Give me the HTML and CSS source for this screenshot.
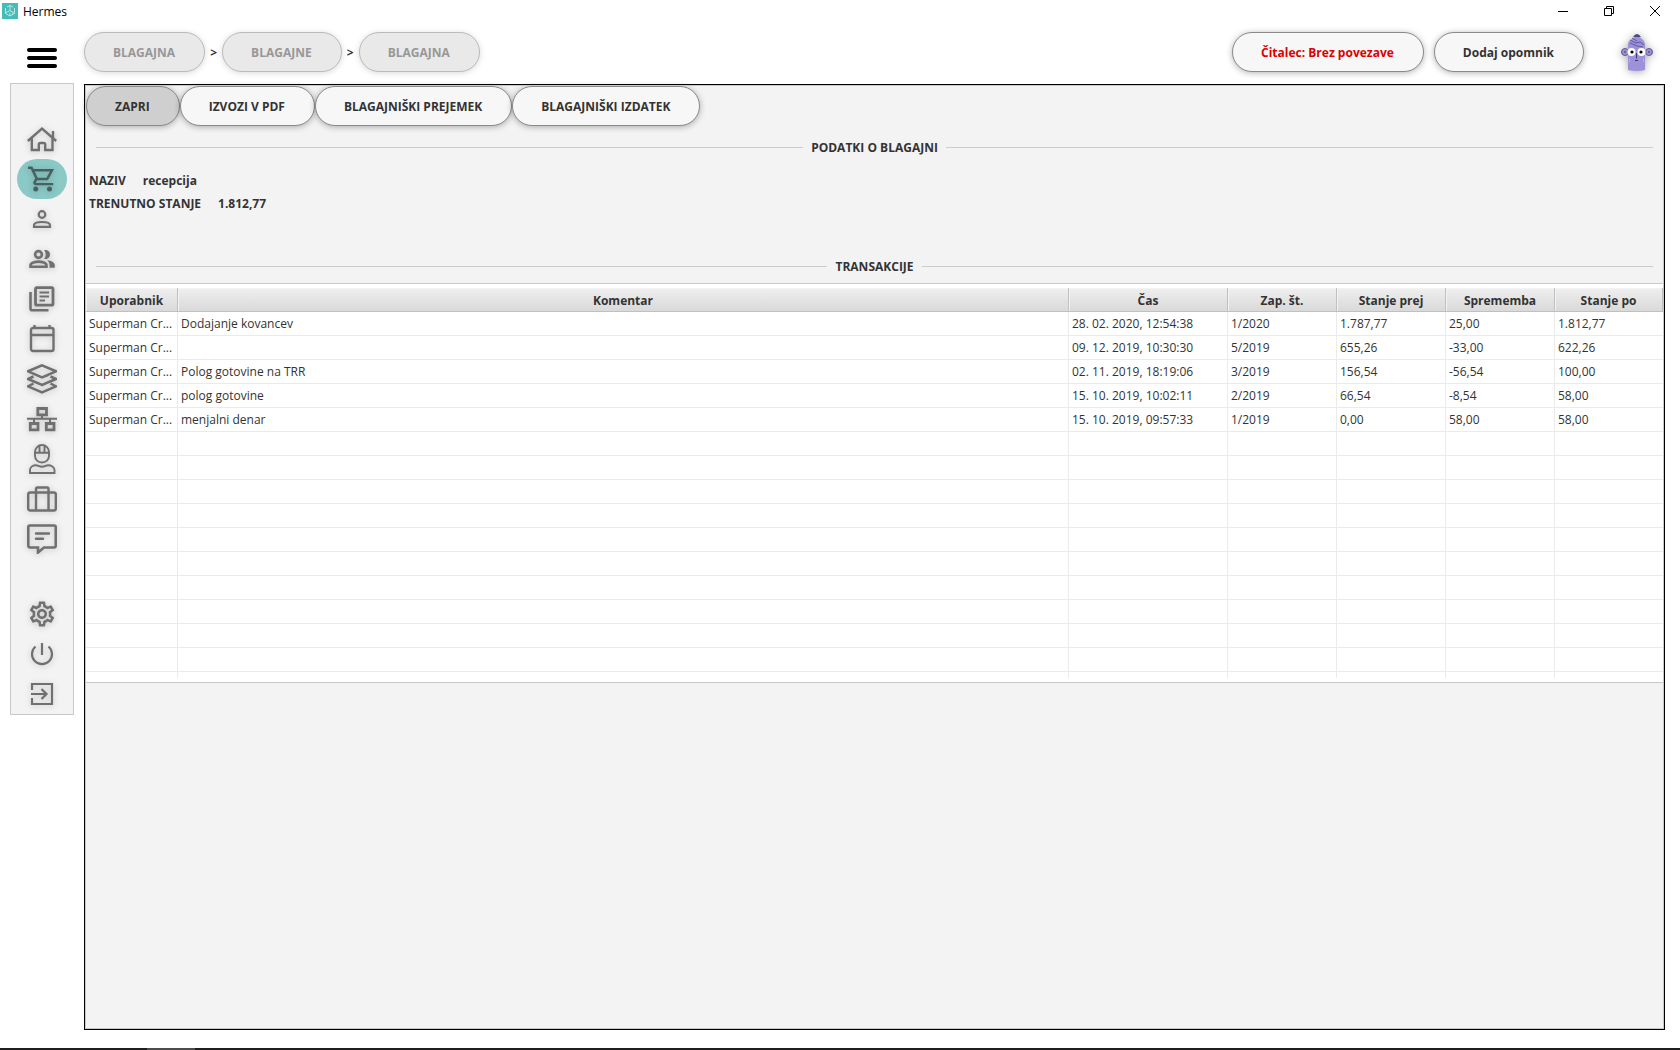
FILE: index.html
```html
<!DOCTYPE html>
<html lang="sl">
<head>
<meta charset="utf-8">
<title>Hermes</title>
<link rel="stylesheet" href="styles.css">
</head>
<body>
<div class="titlebar">
  <svg class="app-logo" viewBox="0 0 16 16" aria-hidden="true"><rect width="16" height="16" fill="#45bdb6"/><path d="M8 2.500v5M8 2.500L5 4M8 2.500l3 1.500M3.500 5v5.500L8 13l4.500-2.500V5M3.500 10L8 7.500l3 2M8 13v-3M11 8.500v3" fill="none" stroke="#b5e8e4"/></svg>
  <span class="app-name">Hermes</span>
  <div class="window-controls">
    <button type="button" class="win-btn" aria-label="Pomanjšaj"><svg viewBox="0 0 10 10"><path d="M0 5.500h10"/></svg></button>
    <button type="button" class="win-btn" aria-label="Obnovi"><svg viewBox="0 0 10 10"><path d="M.5 2.500h7v7h-7zM2.500 2.500v-2h7v7h-2"/></svg></button>
    <button type="button" class="win-btn" aria-label="Zapri okno"><svg viewBox="0 0 10 10"><path d="M0 0l10 10M10 0L0 10"/></svg></button>
  </div>
</div>

<header class="topbar">
  <button type="button" class="menu-btn" aria-label="Meni"><span class="bar"></span><span class="bar"></span><span class="bar"></span></button>
  <nav class="crumbs">
    <button type="button" class="pill" disabled>BLAGAJNA</button>
    <span class="crumb-sep">&gt;</span>
    <button type="button" class="pill" disabled>BLAGAJNE</button>
    <span class="crumb-sep">&gt;</span>
    <button type="button" class="pill" disabled>BLAGAJNA</button>
  </nav>
  <div class="actions">
    <button type="button" class="pill alert">Čitalec: Brez povezave</button>
    <button type="button" class="pill">Dodaj opomnik</button>
  </div>
  <svg class="avatar" viewBox="0 0 32 40" role="img" aria-label="Uporabnik">
    <circle cx="4" cy="20" r="3.500" fill="#9a90d6" stroke="#5d5790"/><circle cx="28" cy="20" r="3.500" fill="#9a90d6" stroke="#5d5790"/>
    <path d="M3 20h2M27 20h2" stroke="#3d3966"/>
    <path d="M7 38V12q0-3 4-5l5-4 5 4q3 2 3 5v26q-8 2-17 0z" fill="#9d92da"/>
    <path d="M12 5q4-6 8 0z" fill="#4b4780"/>
    <path d="M9 8l6 3 4-1 4 3M9 11l7 3 6 1M11 6l5 3" fill="none" stroke="#6159a0"/>
    <circle cx="10.500" cy="20" r="4" fill="#fff"/><circle cx="20.500" cy="20" r="4" fill="#fff"/>
    <circle cx="11" cy="20" r="1.600" fill="#000"/><circle cx="20" cy="20" r="1.600" fill="#000"/>
    <path d="M15.500 21v5.500M14 28.500h3" stroke="#3d3966"/>
    <path d="M8.500 27v3M22.500 27v3" stroke="#c9c2f0" stroke-dasharray="1 1"/>
  </svg>
</header>

<div class="workspace">
  <nav class="sidebar">
    <a class="nav-item" href="#" aria-label="Domov"><svg viewBox="0 0 30 30"><path d="M.8 17L15 4.700 29.200 17M4.800 14.500V26H11.800V20.500Q11.800 19 13.300 19h3.400Q18.200 19 18.200 20.500V26H25.500V14.500M26 13.500V7" fill="none" stroke-width="2.400"/></svg></a>
    <a class="nav-item active" href="#" aria-label="Blagajna"><svg viewBox="0 0 24 24" class="solid"><path d="M15.550 13c.75 0 1.410-.41 1.750-1.030L21.700 4H5.210l-.94-2H.8v2H3l3.600 7.590-1.350 2.440C4.520 15.370 5.480 17 7 17h14v-1.800H7L8.100 13zM6.160 6h12.150l-2.760 5H8.530zM7 18a2 2 0 1 0 0 4 2 2 0 0 0 0-4zM18 18a2 2 0 1 0 0 4 2 2 0 0 0 0-4z"/></svg></a>
    <a class="nav-item" href="#" aria-label="Gost"><svg viewBox="0 0 30 30"><circle cx="15" cy="10.500" r="3.300" fill="none" stroke-width="2.200"/><path d="M7 22.800v-1.500c0-2.500 5-3.300 8-3.300s8 .8 8 3.300v1.500z" fill="none" stroke-width="2.200"/></svg></a>
    <a class="nav-item" href="#" aria-label="Skupine"><svg viewBox="0 0 30 30"><circle cx="11.500" cy="10.500" r="3.400" fill="none" stroke-width="2.600"/><path d="M3.500 22.700v-1.500c0-2.500 5-3.600 8-3.600s8 1.100 8 3.600v1.500z" fill="none" stroke-width="2.600"/><path class="fill" d="M17.200 6.200c1-.5 5.800-.4 5.800 4.300s-4.800 4.900-5.800 4.400c2-2.600 2-6 0-8.700zM20.200 16.200c4 .4 7.600 2 7.600 4.800v2.800h-5.300V21c0-2-1-3.600-2.300-4.800z"/></svg></a>
    <a class="nav-item" href="#" aria-label="Dokumenti"><svg viewBox="0 0 30 30"><rect x="8.500" y="3.700" width="17.500" height="17.500" rx="1.500" fill="none" stroke-width="2.800"/><path d="M3.500 8v16.500q0 1.800 1.800 1.800H21.500" fill="none" stroke-width="2.600"/><path d="M12.500 8.500h9.500M12.500 12.500h9.500M12.500 16.500h5.500" fill="none" stroke-width="2.200"/></svg></a>
    <a class="nav-item" href="#" aria-label="Koledar"><svg viewBox="0 0 30 30"><rect x="4" y="4" width="22.500" height="23" rx="2" fill="none" stroke-width="2.400"/><path d="M4 11h22.500M7.500 1v3M22.500 1v3" fill="none" stroke-width="2.400"/></svg></a>
    <a class="nav-item" href="#" aria-label="Sloji"><svg viewBox="0 0 30 30"><path d="M15 1.300l14 6-14 6-14-6zM6.500 12.500L1 15l14 6 14-6-5.500-2.500M6.500 19.500L1 22.300l14 6.200 14-6.200-5.500-2.800M15 13.300l6-2.300M15 21l6-2.600" fill="none" stroke-width="2.500"/></svg></a>
    <a class="nav-item" href="#" aria-label="Omrežje"><svg viewBox="0 0 30 30"><path d="M10.800 4.500h8.700v6.300h-8.700zM3.300 19.500h7.700v6.300H3.300zM19.300 19.500H27v6.300h-7.700z" fill="none" stroke-width="2.800"/><path d="M0 14.800h30M15 11v4M7 15v4M23 15v4" fill="none" stroke-width="2"/></svg></a>
    <a class="nav-item" href="#" aria-label="Osebje"><svg viewBox="0 0 30 30"><path d="M8 8.500V12a7 6.500 0 0 0 14 0V8.500M8 8a7 7 0 0 1 14 0M7 8.700h16M12.500 8V2M17.500 8V2M3 29v-3c0-3 3-4.800 6-4.800 2 0 3 1.500 6 1.500s4-1.500 6-1.500c3 0 6.500 1.800 6.500 4.800v3z" fill="none" stroke-width="1.900"/></svg></a>
    <a class="nav-item" href="#" aria-label="Potovanja"><svg viewBox="0 0 30 30"><rect x="1.200" y="8.500" width="27.600" height="18" rx="2" fill="none" stroke-width="2.400"/><path d="M9 26.500V5Q9 3.500 10.500 3.500h9.500Q21.500 3.500 21.500 5v21.500" fill="none" stroke-width="2.400"/></svg></a>
    <a class="nav-item" href="#" aria-label="Sporočila"><svg viewBox="0 0 30 30"><path d="M3 1.500h24Q28.700 1.500 28.700 3v18.500Q28.700 23.500 27 23.500H17L11 28.500v-5H3Q1.300 23.500 1.300 21.500V3Q1.300 1.500 3 1.500z" fill="none" stroke-width="2.600"/><path d="M9 9.500h13M9 14.800h7" fill="none" stroke-width="2.400" stroke-linecap="round"/></svg></a>
    <div class="nav-gap"></div>
    <a class="nav-item" href="#" aria-label="Nastavitve"><svg viewBox="0 0 24 24" class="solid"><path d="M19.430 12.980c.04-.32.07-.64.07-.98 0-.34-.03-.66-.07-.98l2.110-1.650c.19-.15.24-.42.12-.64l-2-3.460c-.09-.16-.26-.25-.44-.25-.06 0-.12.01-.17.03l-2.490 1c-.52-.4-1.080-.73-1.690-.98l-.38-2.650C14.460 2.180 14.250 2 14 2h-4c-.25 0-.46.18-.49.42l-.38 2.650c-.61.25-1.170.59-1.690.98l-2.490-1c-.06-.02-.12-.03-.18-.03-.17 0-.34.09-.43.25l-2 3.460c-.13.22-.07.49.12.64l2.110 1.650c-.04.32-.07.65-.07.98 0 .33.03.66.07.98l-2.110 1.650c-.19.15-.24.42-.12.64l2 3.460c.09.16.26.25.44.25.06 0 .12-.01.17-.03l2.490-1c.52.4 1.080.73 1.690.98l.38 2.650c.03.24.24.42.49.42h4c.25 0 .46-.18.49-.42l.38-2.650c.61-.25 1.170-.59 1.690-.98l2.490 1c.06.02.12.03.18.03.17 0 .34-.09.43-.25l2-3.460c.12-.22.07-.49-.12-.64l-2.110-1.650zm-1.980-1.710c.04.31.05.52.05.73 0 .21-.02.43-.05.73l-.14 1.130.89.7 1.080.84-.7 1.210-1.270-.51-1.040-.42-.9.68c-.43.32-.84.56-1.250.73l-1.060.43-.16 1.130-.2 1.350h-1.400l-.19-1.350-.16-1.130-1.060-.43c-.43-.18-.83-.41-1.230-.71l-.91-.7-1.060.43-1.270.51-.7-1.210 1.080-.84.89-.7-.14-1.130c-.03-.31-.05-.54-.05-.74s.02-.43.05-.73l.14-1.130-.89-.7-1.080-.84.7-1.210 1.270.51 1.040.42.9-.68c.43-.32.84-.56 1.250-.73l1.060-.43.16-1.130.2-1.350h1.390l.19 1.350.16 1.130 1.060.43c.43.18.83.41 1.230.71l.91.7 1.060-.43 1.270-.51.7 1.210-1.070.85-.89.7.14 1.130zM12 8c-2.210 0-4 1.790-4 4s1.790 4 4 4 4-1.790 4-4-1.790-4-4-4zm0 6c-1.100 0-2-.9-2-2s.9-2 2-2 2 .9 2 2-.9 2-2 2z"/></svg></a>
    <a class="nav-item" href="#" aria-label="Izklop"><svg viewBox="0 0 30 30"><path d="M15 4v12M8.500 7.500a10 10 0 1 0 13 0" fill="none" stroke-width="2.200"/></svg></a>
    <a class="nav-item" href="#" aria-label="Odjava"><svg viewBox="0 0 30 30"><path d="M5 11V5h20v20H5v-6M4 15h15M14.500 10l5 5-5 5" fill="none" stroke-width="2.200"/></svg></a>
  </nav>

  <main class="panel">
    <div class="toolbar">
      <button type="button" class="pill pressed">ZAPRI</button>
      <button type="button" class="pill">IZVOZI V PDF</button>
      <button type="button" class="pill">BLAGAJNIŠKI PREJEMEK</button>
      <button type="button" class="pill">BLAGAJNIŠKI IZDATEK</button>
    </div>
    <h2 class="section-title">PODATKI O BLAGAJNI</h2>
    <dl class="details">
      <div class="detail"><dt>NAZIV</dt><dd>recepcija</dd></div>
      <div class="detail"><dt>TRENUTNO STANJE</dt><dd>1.812,77</dd></div>
    </dl>
    <h2 class="section-title">TRANSAKCIJE</h2>
    <div class="table-box">
      <table class="grid">
        <colgroup><col class="c-user"><col><col class="c-time"><col class="c-num"><col class="c-num"><col class="c-num"><col class="c-last"></colgroup>
        <thead><tr><th>Uporabnik</th><th>Komentar</th><th>Čas</th><th>Zap. št.</th><th>Stanje prej</th><th>Sprememba</th><th>Stanje po</th></tr></thead>
        <tbody>
          <tr><td>Superman Cr...</td><td>Dodajanje kovancev</td><td>28. 02. 2020, 12:54:38</td><td>1/2020</td><td>1.787,77</td><td>25,00</td><td>1.812,77</td></tr>
          <tr><td>Superman Cr...</td><td></td><td>09. 12. 2019, 10:30:30</td><td>5/2019</td><td>655,26</td><td>-33,00</td><td>622,26</td></tr>
          <tr><td>Superman Cr...</td><td>Polog gotovine na TRR</td><td>02. 11. 2019, 18:19:06</td><td>3/2019</td><td>156,54</td><td>-56,54</td><td>100,00</td></tr>
          <tr><td>Superman Cr...</td><td>polog gotovine</td><td>15. 10. 2019, 10:02:11</td><td>2/2019</td><td>66,54</td><td>-8,54</td><td>58,00</td></tr>
          <tr><td>Superman Cr...</td><td>menjalni denar</td><td>15. 10. 2019, 09:57:33</td><td>1/2019</td><td>0,00</td><td>58,00</td><td>58,00</td></tr>
          <tr><td></td><td></td><td></td><td></td><td></td><td></td><td></td></tr>
          <tr><td></td><td></td><td></td><td></td><td></td><td></td><td></td></tr>
          <tr><td></td><td></td><td></td><td></td><td></td><td></td><td></td></tr>
          <tr><td></td><td></td><td></td><td></td><td></td><td></td><td></td></tr>
          <tr><td></td><td></td><td></td><td></td><td></td><td></td><td></td></tr>
          <tr><td></td><td></td><td></td><td></td><td></td><td></td><td></td></tr>
          <tr><td></td><td></td><td></td><td></td><td></td><td></td><td></td></tr>
          <tr><td></td><td></td><td></td><td></td><td></td><td></td><td></td></tr>
          <tr><td></td><td></td><td></td><td></td><td></td><td></td><td></td></tr>
          <tr><td></td><td></td><td></td><td></td><td></td><td></td><td></td></tr>
          <tr class="tail"><td></td><td></td><td></td><td></td><td></td><td></td><td></td></tr>
        </tbody>
      </table>
    </div>
  </main>
</div>
<div class="taskbar"><span class="task"></span></div>
</body>
</html>
```

FILE: styles.css
```css
* { box-sizing: border-box; }

body {
  margin: 0;
  min-height: 100vh;
  display: flex;
  flex-direction: column;
  background: #fff;
  color: #333;
  font: 12px/16px "Open Sans", "Noto Sans", sans-serif;
}

button { font: inherit; color: inherit; }

/* Window title bar */
.titlebar { display: flex; align-items: center; height: 22px; padding-left: 2px; }
.app-logo { width: 16px; height: 16px; }
.app-name { margin-left: 5px; padding-top: 2px; color: #000; }
.window-controls { display: flex; margin-left: auto; padding-right: 2px; }
.win-btn {
  display: flex;
  align-items: center;
  justify-content: center;
  width: 46px;
  height: 22px;
  padding: 0;
  border: 0;
  background: none;
}
.win-btn svg { width: 10px; height: 10px; fill: none; stroke: #000; overflow: visible; }

/* Top bar */
.topbar { display: flex; align-items: center; padding: 10px 27px 11px; }
.menu-btn {
  display: flex;
  flex-direction: column;
  gap: 4px;
  width: 30px;
  margin: 12px 27px 0 0;
  padding: 0;
  border: 0;
  background: none;
}
.bar { width: 100%; height: 4px; border-radius: 2px; background: #000; }
.crumbs { display: flex; align-items: center; }
.crumb-sep { width: 17px; padding-top: 2px; text-align: center; font-weight: 700; }
.actions { display: flex; gap: 10px; margin-left: auto; }
.avatar {
  width: 32px;
  height: 40px;
  margin-left: 37px;
  filter: drop-shadow(0 1px 4px rgba(0, 0, 0, .35));
}

.pill {
  height: 40px;
  padding: 2px 29px 0 28px;
  border: 1px solid #8a8a8a;
  border-radius: 20px;
  background: #f7f7f7;
  box-shadow: 0 1px 6px rgba(0, 0, 0, .3);
  font-weight: 700;
  white-space: nowrap;
}
.pill:disabled {
  border-color: #bbb;
  background: #e9e9e9;
  box-shadow: 0 1px 6px rgba(0, 0, 0, .15);
  color: #979797;
}
.pill.alert { color: #dc0000; }
.pill.pressed { background: #cfcfcf; }

/* Sidebar and panel */
.workspace { flex: 1; display: flex; align-items: flex-start; gap: 10px; padding: 0 15px 18px 10px; }
.sidebar {
  display: flex;
  flex-direction: column;
  align-items: center;
  width: 64px;
  padding-top: 35px;
  border: 1px solid #c8c8c8;
  background: #f3f3f3;
}
.nav-item {
  display: flex;
  align-items: center;
  justify-content: center;
  width: 50px;
  height: 40px;
  border-radius: 20px;
}
.nav-item svg {
  width: 30px;
  height: 30px;
  stroke: #707070;
  filter: drop-shadow(0 1px 3px rgba(0, 0, 0, .2));
}
.nav-item .solid { fill: #707070; stroke-width: 0; }
.nav-item .fill { fill: #707070; stroke: none; }
.nav-item.active { background: #8bc9c6; }
.nav-item.active .solid { fill: #46615f; }
.nav-gap { height: 35px; }

.panel {
  flex: 1;
  align-self: stretch;
  min-width: 0;
  margin-top: 1px;
  border: 1px solid #000;
  outline: 1px solid #c8c8c8;
  outline-offset: -2px;
  padding: 1px;
  background: #f3f3f3;
}
.toolbar { display: flex; }
.section-title {
  display: flex;
  align-items: center;
  gap: 8px;
  margin: 14px 10px 8px;
  font-size: 12px;
  line-height: 16px;
  font-weight: 700;
}
.section-title::before,
.section-title::after { content: ""; flex: 1; height: 1px; margin-bottom: 2px; background: #ccc; }
.details { margin: 13px 3px 44px; }
.detail { display: flex; gap: 17px; height: 23px; align-items: center; font-weight: 700; }
.detail dd { margin: 0; }

/* Transactions */
.table-box { border: 1px solid #c8c8c8; border-width: 1px 0; padding: 4px 0; background: #fff; }
.grid { width: 100%; table-layout: fixed; border-collapse: separate; border-spacing: 0; }
.c-user { width: 92px; }
.c-time { width: 159px; }
.c-num { width: 109px; }
.c-last { width: 108px; }
.grid th {
  height: 24px;
  padding: 2px 0 0;
  border-right: 1px solid #c0c0c0;
  border-bottom: 1px solid #c0c0c0;
  background: linear-gradient(#efefef, #d9d9d9);
  box-shadow: inset 1px 1px #f3f3f3;
  font-weight: 700;
}
.grid td {
  height: 24px;
  padding: 0 3px;
  border-right: 1px solid #ebebeb;
  border-bottom: 1px solid #ebebeb;
  overflow: hidden;
  white-space: nowrap;
}
.grid .tail td { height: 6px; border-bottom: 0; }
.grid td:last-child { border-right: 0; }

.taskbar { height: 2px; padding-left: 147px; background: #1f1f1f; }
.task { display: block; width: 48px; height: 2px; background: #4c4c4c; }
```
